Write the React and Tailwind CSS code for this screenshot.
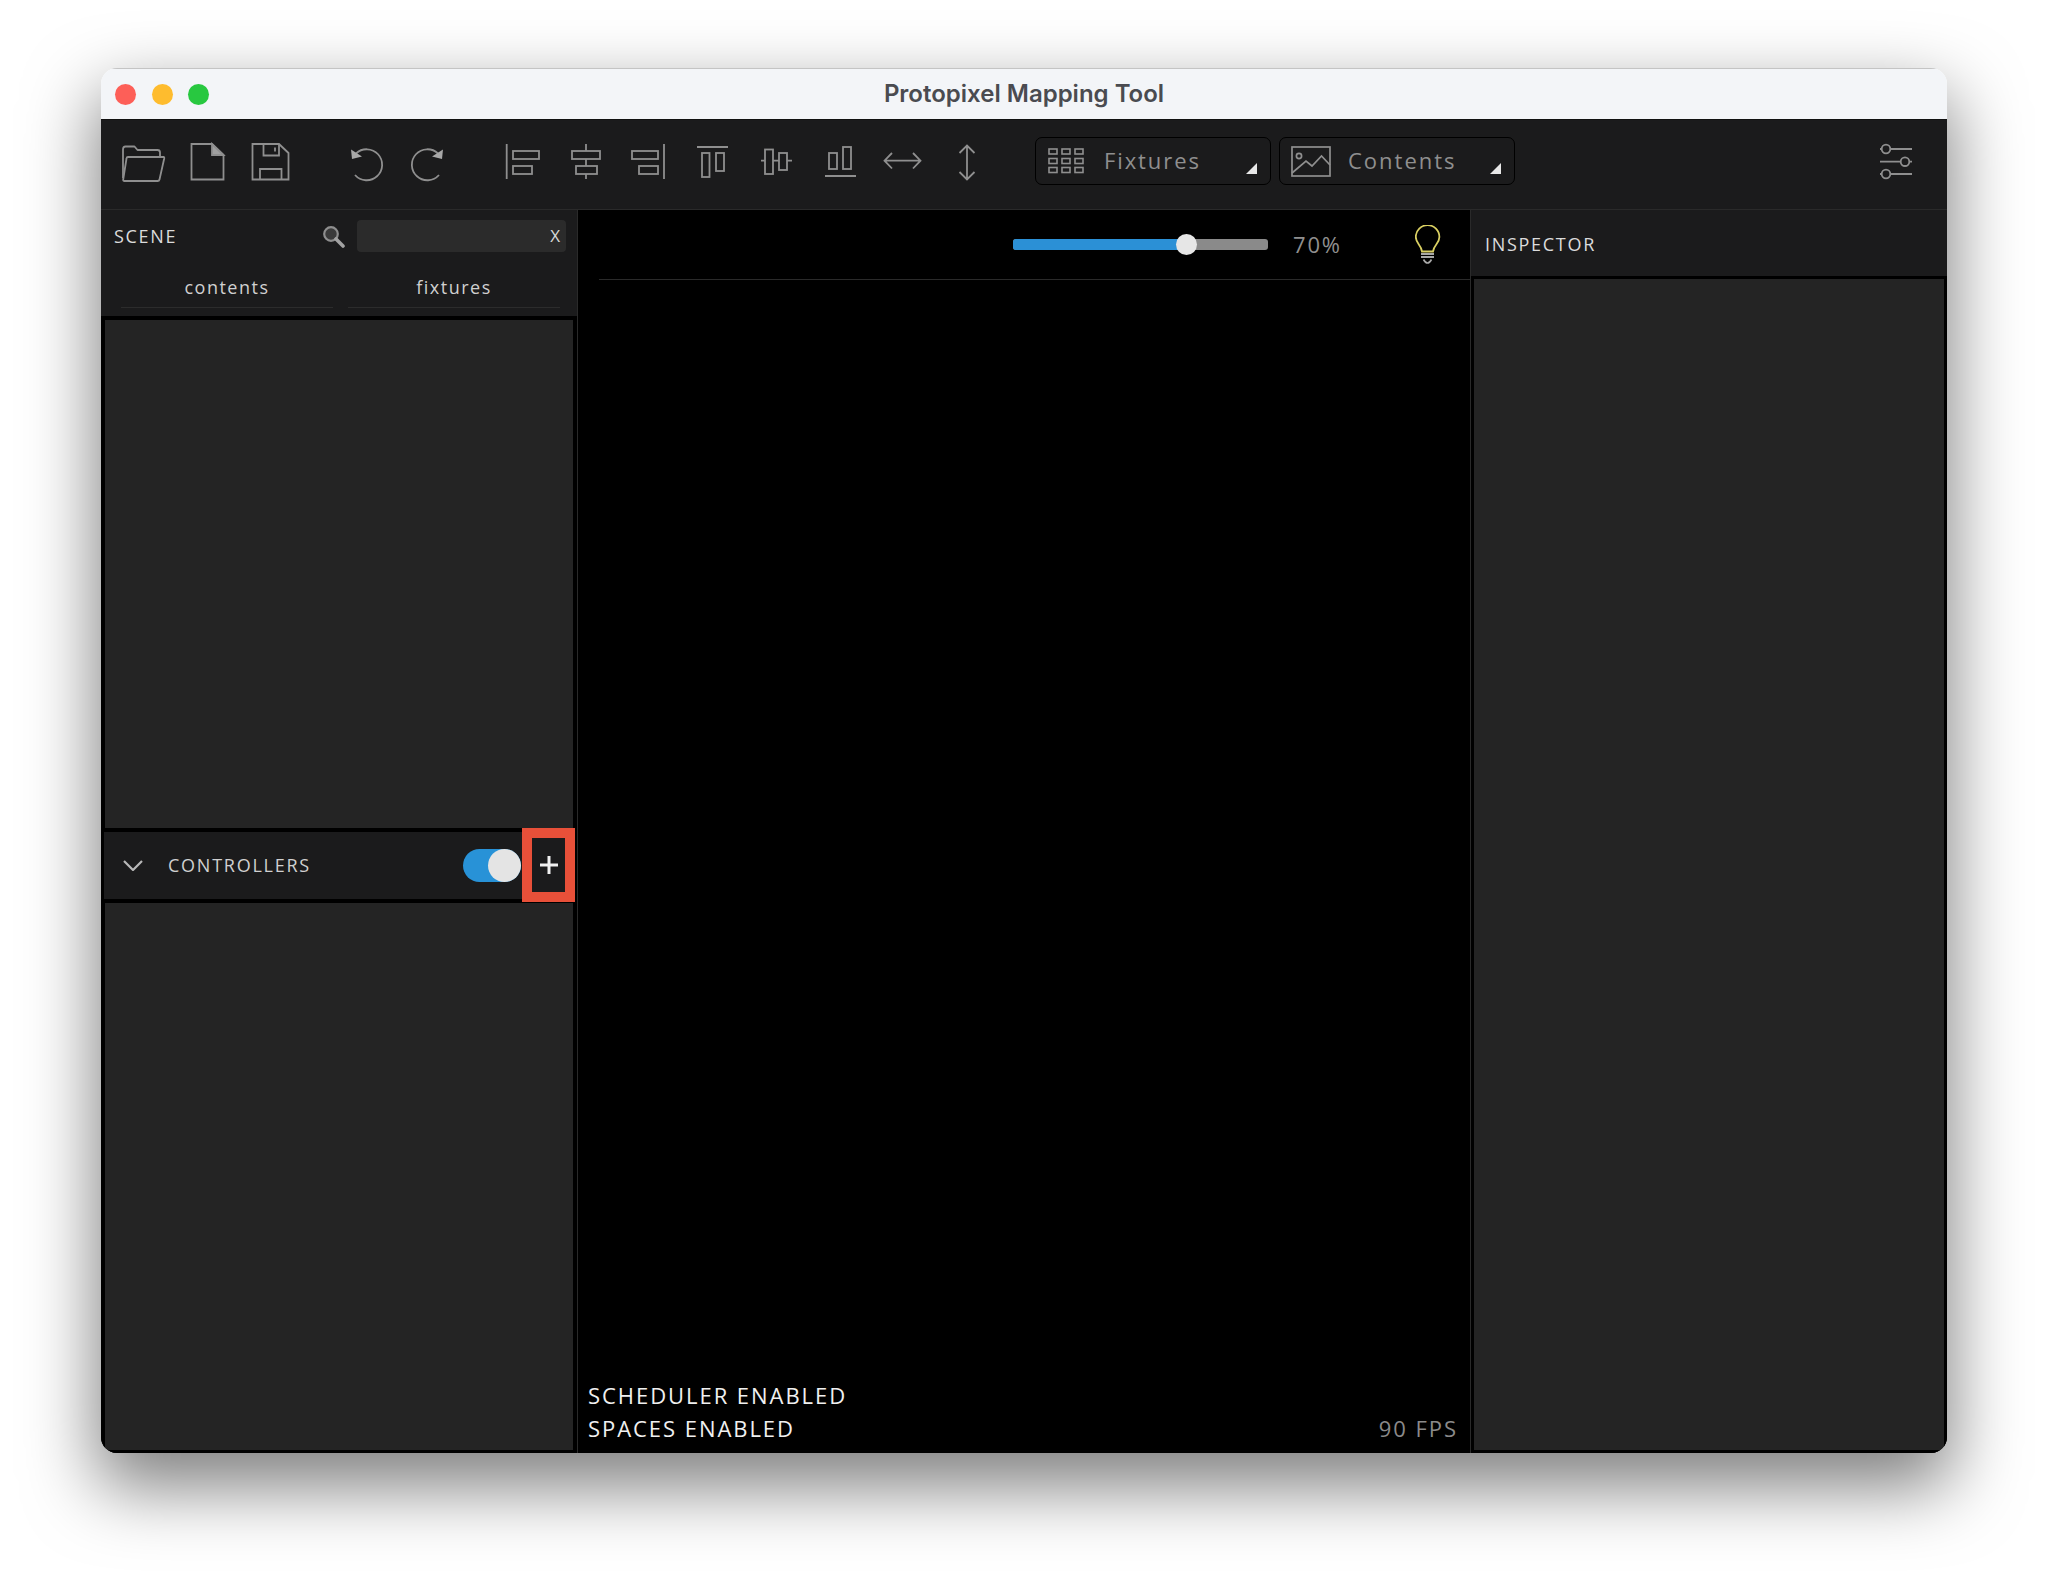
const ICON = "#8f8f8f";

function Tile({ x, w = 64, children }) {
  return (
    <svg width={w} height="48" viewBox={`${x} 137 ${w} 48`} className="shrink-0" fill="none" stroke={ICON} strokeWidth="1.8">
      {children}
    </svg>
  );
}

const Dot = ({ c }) => <div className={`w-[21px] h-[21px] rounded-full ${c}`} />;

function Tab({ label }) {
  return (
    <div className="w-[212px] h-[40px] flex items-center justify-center border-b border-[#2c2c2c] text-[18px] tracking-[1.5px] text-[#d0d0d0]">
      {label}
    </div>
  );
}

function Triangle() {
  return (
    <svg width="11" height="11" viewBox="0 0 11 11" className="ml-auto mr-[13px] mt-[15px] shrink-0">
      <path d="M11 0V11H0Z" fill="#e8e8e8" />
    </svg>
  );
}

function Toolbar() {
  return (
    <div className="h-[90px] bg-[#1b1b1c] border-b border-[#2a2a2a] flex items-start pt-[17px] pl-[11px]">
      <Tile x={112}>
        <path d="M123 178V149.5Q123 146.5 125.5 146.5H134.5L137.5 150H157.5Q160 150 160 152.5V156.5" strokeLinejoin="round" />
        <path d="M128 157H163.5Q164.5 157 164.2 158.5L159.5 179.5Q159.2 181 157.5 181H124.5Q123 181 123.2 179.5L126.5 158.5Q126.7 157 128 157Z" strokeLinejoin="round" />
      </Tile>
      <Tile x={176}>
        <path d="M191.5 144H212L223.5 155V179.5H191.5Z" />
        <path d="M212 144L223.5 155H212Z" fill="#a0a0a0" />
      </Tile>
      <Tile x={240}>
        <path d="M252.5 144H279L288.5 153V179.5H252.5Z" />
        <path d="M263.5 144V155.5H279V144" />
        <path d="M275 147.5V151.5" />
        <path d="M260 179.5V169H281.5V179.5" />
      </Tile>
      <div className="w-[30px] shrink-0" />
      <Tile x={334}>
        <path d="M356 153.5A15.5 15.5 0 1 1 355 175" />
        <path d="M351 149.5L352 159L362 156.5Z" fill="#a8a8a8" stroke="none" />
      </Tile>
      <Tile x={398}>
        <path d="M438 153.5A15.5 15.5 0 1 0 439 175" />
        <path d="M443 149.5L442 159L432 156.5Z" fill="#a8a8a8" stroke="none" />
      </Tile>
      <div className="w-[32px] shrink-0" />
      <Tile x={494}>
        <path d="M506.7 144V179" />
        <rect x="513" y="151" width="26" height="8" />
        <rect x="513" y="166" width="19" height="8" />
      </Tile>
      <Tile x={558}>
        <path d="M586 144V179" />
        <rect x="572" y="151" width="28" height="8" fill="#1b1b1c" />
        <rect x="576" y="166" width="21" height="8" fill="#1b1b1c" />
      </Tile>
      <Tile x={622}>
        <path d="M664 144V179" />
        <rect x="632" y="151" width="26" height="8" />
        <rect x="639" y="166" width="19" height="8" />
      </Tile>
      <Tile x={686}>
        <path d="M697 147H728" />
        <rect x="702" y="153" width="7.5" height="24" />
        <rect x="716" y="153" width="8" height="18" />
      </Tile>
      <Tile x={750}>
        <path d="M761 160.7H792" />
        <rect x="765" y="149.5" width="8" height="24.5" fill="#1b1b1c" />
        <rect x="779" y="153" width="8" height="17" fill="#1b1b1c" />
      </Tile>
      <Tile x={814}>
        <path d="M825 176H856" />
        <rect x="829" y="153" width="8" height="16" />
        <rect x="843" y="147" width="8" height="22" />
      </Tile>
      <Tile x={878}>
        <path d="M885 160.7H920M892 153L884.5 160.7L892 168.5M913 153L920.5 160.7L913 168.5" />
      </Tile>
      <Tile x={942}>
        <path d="M967 146V179.5M959.5 153L967 145.5L974.5 153M959.5 172L967 179.5L974.5 172" />
      </Tile>
      <div className="w-[29px] shrink-0" />
      <div className="w-[236px] h-[48px] rounded-[7px] border border-black bg-[#1b1b1c] flex items-center pl-[12px] shrink-0">
        <svg width="36" height="26" viewBox="1048 150 36 26" fill="none" stroke={ICON} strokeWidth="1.6" className="shrink-0">
          {[1049, 1062, 1075].map((x) =>
            [151, 160.5, 169.5].map((y) => <rect key={`${x}-${y}`} x={x} y={y} width="8" height="5" />)
          )}
        </svg>
        <span className="ml-[20px] mt-[-2px] text-[22px] tracking-[1.9px] text-[#8f8f8f]">Fixtures</span>
        <Triangle />
      </div>
      <div className="w-[8px] shrink-0" />
      <div className="w-[236px] h-[48px] rounded-[7px] border border-black bg-[#1b1b1c] flex items-center pl-[11px] shrink-0">
        <svg width="40" height="31" viewBox="1291 148 40 31" fill="none" stroke={ICON} strokeWidth="1.7" className="shrink-0">
          <rect x="1292" y="149" width="38" height="29" />
          <circle cx="1299" cy="158" r="2.6" />
          <path d="M1292 175L1306 163L1312 168L1321.5 158L1330 167" />
        </svg>
        <span className="ml-[17px] mt-[-2px] text-[22px] tracking-[2px] text-[#8f8f8f]">Contents</span>
        <Triangle />
      </div>
      <div className="ml-auto mr-[27px]">
        <Tile x={1872} w={48}>
          <path d="M1880 149H1881M1891 149H1912M1880 161.7H1900M1910 161.7H1912M1880 174H1881M1891 174H1912" />
          <circle cx="1886" cy="149" r="4.3" />
          <circle cx="1905" cy="161.7" r="4.3" />
          <circle cx="1886" cy="174" r="4.3" />
        </Tile>
      </div>
    </div>
  );
}

function LeftColumn() {
  return (
    <div className="w-[476px] shrink-0 flex flex-col bg-[#1b1b1c] border-r border-[#2a2a2a] box-content">
      <div className="h-[106px] shrink-0 flex flex-col">
        <div className="flex items-center mt-[10px] h-[32px] pl-[13px] pr-[11px]">
          <span className="text-[18px] tracking-[1.7px] mt-[1px] text-[#dcdcdc]">SCENE</span>
          <svg width="23" height="23" viewBox="0 0 23 23" className="ml-auto shrink-0">
            <circle cx="9" cy="9" r="6.8" fill="#3a3a3a" stroke="#8e8e8e" strokeWidth="2.2" />
            <path d="M14 14L21 21" stroke="#a2a2a2" strokeWidth="3.6" strokeLinecap="round" />
          </svg>
          <div className="ml-[12px] w-[209px] h-[32px] rounded-[4px] bg-[#2b2b2b] flex items-center justify-end pr-[6px] text-[17px] text-[#d8d8d8]">
            X
          </div>
        </div>
        <div className="flex gap-[15px] pl-[20px] mt-[16px]">
          <Tab label="contents" />
          <Tab label="fixtures" />
        </div>
      </div>
      <div className="h-[516px] shrink-0 bg-[#242424] border-[4px] border-black" />
      <div className="h-[71px] shrink-0 flex items-stretch border-b-[4px] border-x-[3px] border-black relative">
        <div className="flex-1 flex items-center">
          <svg width="20" height="11" viewBox="0 0 20 11" fill="none" stroke="#b8b8b8" strokeWidth="2.2" className="ml-[19px] shrink-0">
            <path d="M1 1L10 10L19 1" />
          </svg>
          <span className="ml-[25px] text-[18px] tracking-[1.75px] text-[#d0d0d0]">CONTROLLERS</span>
          <div className="ml-auto mr-[1px] w-[58px] h-[33px] rounded-full bg-[#2892d7] flex justify-end shrink-0">
            <div className="w-[33px] h-[33px] rounded-full bg-[#e4e4e4]" />
          </div>
        </div>
        <div className="w-[53px] h-[74px] mt-[-4px] mb-[-4px] mr-[-1px] border-[10px] border-[#e85039] bg-[#1b1b1c] flex items-center justify-center shrink-0 z-10">
          <svg width="20" height="20" viewBox="0 0 20 20" stroke="#f0f0f0" strokeWidth="3" className="shrink-0">
            <path d="M10 1V19M1 10H19" />
          </svg>
        </div>
      </div>
      <div className="flex-1 bg-[#242424] border-x-[4px] border-b-[3px] border-black" />
    </div>
  );
}

function Center() {
  return (
    <div className="flex-1 min-w-0 bg-black flex flex-col">
      <div className="ml-[21px] h-[70px] shrink-0 border-b border-[#2a2a2a] flex items-center">
        <div className="ml-[414px] w-[255px] h-[11px] rounded-[3px] bg-[#8a8a8a] relative shrink-0">
          <div className="h-full w-[174px] rounded-l-[3px] bg-[#2b90d6]" />
          <div className="absolute left-[163px] top-[-5px] w-[21px] h-[21px] rounded-full bg-[#e6e6e6]" />
        </div>
        <span className="ml-[25px] text-[22px] tracking-[1.8px] text-[#8f8f8f]">70%</span>
        <svg width="26" height="40" viewBox="1415 224.5 26 40" fill="none" className="ml-[73px] shrink-0">
          <path d="M1422 251C1421 244 1415.8 243 1415.8 236.5A11.8 11.8 0 0 1 1439.4 236.5C1439.4 243 1434 244 1433 251Z" stroke="#d9cf62" strokeWidth="1.8" />
          <path d="M1421 253.5H1434M1421 256.5H1434" stroke="#a8a8a8" strokeWidth="1.8" />
          <path d="M1423.5 259Q1427.5 266 1431.5 259" stroke="#a8a8a8" strokeWidth="1.6" />
        </svg>
      </div>
      <div className="mt-auto flex items-end justify-between pl-[10px] pr-[12px] pb-[8px] text-[22px] tracking-[1.95px] leading-[33px]">
        <div className="text-[#f0f0f0]">
          <div>SCHEDULER ENABLED</div>
          <div>SPACES ENABLED</div>
        </div>
        <div className="text-[#8a8a8a]">90 FPS</div>
      </div>
    </div>
  );
}

function RightColumn() {
  return (
    <div className="w-[477px] shrink-0 flex flex-col bg-[#1b1b1c] border-l border-[#2a2a2a]">
      <div className="h-[66px] shrink-0 flex items-center pl-[14px] pt-[2px] text-[18px] tracking-[1.7px] text-[#dcdcdc]">INSPECTOR</div>
      <div className="flex-1 bg-[#242424] border-x-[3px] border-y-[3px] border-black" />
    </div>
  );
}

export default function App() {
  return (
    <div className="w-[2048px] h-[1586px] bg-white pt-[68px] pl-[101px] overflow-hidden" style={{ fontFamily: '"Open Sans", sans-serif' }}>
      <div className="w-[1846px] h-[1385px] rounded-[16px] overflow-hidden flex flex-col shadow-[0_30px_70px_4px_rgba(0,0,0,0.5)]">
        <div className="h-[52px] shrink-0 bg-[#f3f5f8] border-t border-[#c4c4c4] border-b border-b-[#111] flex items-center relative pl-[14px]">
          <div className="flex gap-[15.5px]">
            <Dot c="bg-[#fd5f58]" />
            <Dot c="bg-[#febc2e]" />
            <Dot c="bg-[#28c840]" />
          </div>
          <div className="absolute inset-0 flex items-center justify-center text-[24px] font-semibold text-[#4a4b50] pb-[1px]" style={{ fontFamily: 'Inter, sans-serif' }}>
            Protopixel Mapping Tool
          </div>
        </div>
        <Toolbar />
        <div className="flex-1 min-h-0 flex">
          <LeftColumn />
          <Center />
          <RightColumn />
        </div>
      </div>
    </div>
  );
}
